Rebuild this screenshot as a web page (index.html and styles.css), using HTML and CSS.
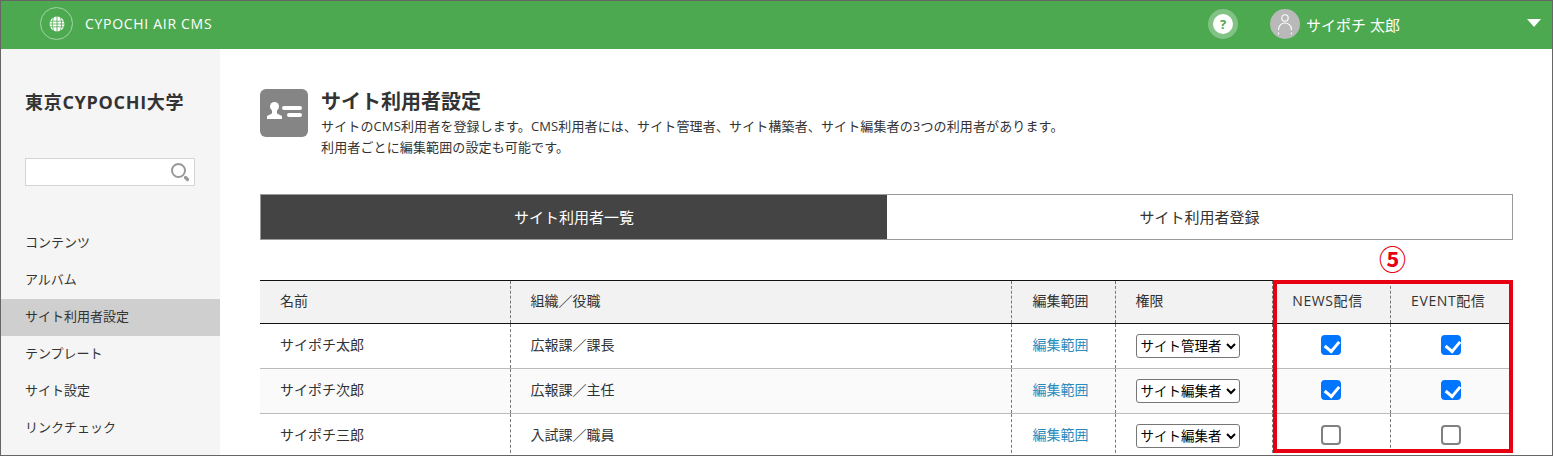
FILE: index.html
```html
<!DOCTYPE html>
<html lang="ja">

<head>
    <meta charset="UTF-8">
    <meta name="viewport" content="width=device-width, initial-scale=1.0">
    <title>サイト利用者設定</title>
    <link rel="stylesheet" href="styles.css">
</head>

<body>
    <div class="frame">
        <header class="topbar">
            <div class="logo-ring">
                <svg width="16" height="16" viewBox="0 0 16 16" fill="none" stroke="#fff">
                    <circle cx="8" cy="8" r="7.5" fill="#fff" stroke="none" />
                    <path d="M0 5.2h16M0 8h16M0 10.8h16M8 0v16M4.8 1c-2 4-2 10 0 14M11.2 1c2 4 2 10 0 14" stroke="#4ca950" stroke-width=".8" />
                </svg>
            </div>
            <span class="brand">CYPOCHI AIR CMS</span>
            <div class="help"><span class="help-dot">?</span></div>
            <div class="avatar">
                <svg width="20" height="22" viewBox="0 0 20 22" fill="none" stroke="#fff" stroke-width="1.1">
                    <circle cx="10" cy="5" r="3.200" />
                    <path d="M3.500 17c0-5 3.500-7 6.500-7s6.500 2 6.500 7" />
                    <path d="M3.500 19.500v2M16.500 19.500v2" />
                </svg>
            </div>
            <span class="user-name">サイポチ 太郎</span>
            <span class="caret"></span>
        </header>

        <div class="layout">
            <aside class="sidebar">
                <div class="org">東京CYPOCHI大学</div>
                <div class="search">
                    <svg width="20" height="20" viewBox="0 0 20 20" fill="none">
                        <circle cx="8.5" cy="8.5" r="6.500" stroke="#999" stroke-width="2" />
                        <path d="M15.500 15.500l2 2" stroke="#999" stroke-width="3.200" stroke-linecap="round" />
                    </svg>
                </div>
                <nav class="side-nav">
                    <a>コンテンツ</a>
                    <a>アルバム</a>
                    <a class="active">サイト利用者設定</a>
                    <a>テンプレート</a>
                    <a>サイト設定</a>
                    <a>リンクチェック</a>
                </nav>
            </aside>

            <main class="content">
                <div class="page-head">
                    <div class="page-icon">
                        <svg width="48" height="48" viewBox="0 0 48 48" fill="#fff">
                            <circle cx="14.500" cy="17.500" r="4.500" />
                            <path d="M12 21h5v3.500l5 2.500v3H7v-3l5-2.500z" />
                            <rect x="22" y="17" width="20" height="4" rx="2" />
                            <rect x="27" y="24" width="15" height="4" rx="2" />
                        </svg>
                    </div>
                    <div>
                        <h1>サイト利用者設定</h1>
                        <p>サイトのCMS利用者を登録します。CMS利用者には、サイト管理者、サイト構築者、サイト編集者の3つの利用者があります。<br>利用者ごとに編集範囲の設定も可能です。</p>
                    </div>
                </div>

                <div class="tabs">
                    <div class="tab on">サイト利用者一覧</div>
                    <div class="tab">サイト利用者登録</div>
                </div>

                <div class="table-wrap">
                    <div class="marker">⑤</div>
                    <div class="highlight"></div>
                    <table class="users">
                        <thead>
                            <tr>
                                <th class="c-name">名前</th>
                                <th class="c-org">組織／役職</th>
                                <th class="c-range">編集範囲</th>
                                <th class="c-role">権限</th>
                                <th class="c-news">NEWS配信</th>
                                <th class="c-event">EVENT配信</th>
                            </tr>
                        </thead>
                        <tbody>
                            <tr>
                                <td>サイポチ太郎</td>
                                <td>広報課／課長</td>
                                <td class="range"><a class="link">編集範囲</a></td>
                                <td class="role"><select><option>サイト管理者</option></select></td>
                                <td class="mid"><input type="checkbox" checked></td>
                                <td class="mid"><input type="checkbox" checked></td>
                            </tr>
                            <tr class="alt">
                                <td>サイポチ次郎</td>
                                <td>広報課／主任</td>
                                <td class="range"><a class="link">編集範囲</a></td>
                                <td class="role"><select><option>サイト編集者</option></select></td>
                                <td class="mid"><input type="checkbox" checked></td>
                                <td class="mid"><input type="checkbox" checked></td>
                            </tr>
                            <tr>
                                <td>サイポチ三郎</td>
                                <td>入試課／職員</td>
                                <td class="range"><a class="link">編集範囲</a></td>
                                <td class="role"><select><option>サイト編集者</option></select></td>
                                <td class="mid"><input type="checkbox"></td>
                                <td class="mid"><input type="checkbox"></td>
                            </tr>
                        </tbody>
                    </table>
                </div>
            </main>
        </div>
    </div>
</body>

</html>
```

FILE: styles.css
```css
* {
    box-sizing: border-box;
}

html,
body {
    margin: 0;
    height: 456px;
    overflow: hidden;
}

body {
    font-family: "Open Sans", "Noto Sans CJK JP", sans-serif;
    font-size: 14px;
    color: #333;
    background: #fff;
}

.frame {
    width: 1553px;
    height: 456px;
    border: 1px solid #666;
    overflow: hidden;
}

.topbar {
    display: flex;
    align-items: center;
    height: 48px;
    padding: 0 11px 0 39px;
    background: #4ca950;
    color: #fff;
}

.logo-ring {
    display: flex;
    justify-content: center;
    align-items: center;
    width: 33px;
    height: 33px;
    margin-bottom: 3px;
    border: 1px solid #a5d4a7;
    border-radius: 50%;
}

.brand {
    margin: 0 0 4px 12px;
    font-size: 14px;
    letter-spacing: .7px;
}

.help {
    display: flex;
    justify-content: center;
    align-items: center;
    width: 30px;
    height: 30px;
    margin: 0 0 2px auto;
    border-radius: 50%;
    background: #82c285;
}

.help-dot {
    width: 20px;
    height: 20px;
    border-radius: 50%;
    background: #fff;
    color: #4ca950;
    font-size: 13px;
    font-weight: 700;
    line-height: 20px;
    text-align: center;
}

.avatar {
    display: flex;
    justify-content: center;
    align-items: center;
    width: 30px;
    height: 30px;
    margin: 0 0 2px 32px;
    border-radius: 50%;
    background: #b9b9b9;
}

.user-name {
    margin: 0 127px 2px 6px;
    font-size: 15px;
}

.caret {
    width: 0;
    height: 0;
    margin-bottom: 4px;
    border-left: 7px solid transparent;
    border-right: 7px solid transparent;
    border-top: 8px solid #fff;
}

.layout {
    display: flex;
    height: 406px;
}

.sidebar {
    flex: none;
    width: 219px;
    padding-top: 41px;
    background: #f5f5f5;
}

.org {
    margin-left: 24px;
    font-size: 18px;
    font-weight: 700;
    line-height: 24px;
    letter-spacing: .7px;
}

.search {
    display: flex;
    justify-content: flex-end;
    align-items: center;
    width: 170px;
    height: 28px;
    margin: 44px 0 0 24px;
    padding-right: 4px;
    background: #fff;
    border: 1px solid #d5d5d5;
}

.side-nav {
    display: flex;
    flex-direction: column;
    margin-top: 39px;
}

.side-nav a {
    height: 37px;
    padding-left: 24px;
    font-size: 13px;
    line-height: 35px;
}

.side-nav a.active {
    background: #cfcfcf;
}

.content {
    flex: none;
    width: 1293px;
    padding: 40px 0 0 40px;
}

.page-head {
    display: flex;
    gap: 13px;
}

.page-icon {
    flex: none;
    width: 48px;
    height: 48px;
    border-radius: 6px;
    background: #858585;
}

.page-icon svg {
    display: block;
}

h1 {
    margin: 0;
    padding-top: 1px;
    font-size: 20px;
    font-weight: 700;
    line-height: 24px;
}

.page-head p {
    margin: 2px 0 0;
    font-size: 13px;
    line-height: 21px;
    letter-spacing: .13px;
}

.tabs {
    display: flex;
    width: 1253px;
    height: 46px;
    margin-top: 36px;
    border: 1px solid #999;
}

.tab {
    flex: 1;
    font-size: 15px;
    line-height: 44px;
    text-align: center;
}

.tab.on {
    flex: none;
    width: 626px;
    background: #444;
    color: #fff;
}

.table-wrap {
    position: relative;
    width: 1253px;
    margin-top: 40px;
}

.marker {
    position: absolute;
    top: -36px;
    left: 1119px;
    color: #e60012;
    font-size: 27px;
    font-weight: 700;
    line-height: 32px;
}

.highlight {
    position: absolute;
    top: 0;
    left: 1013px;
    width: 240px;
    height: 173px;
    border: 4px solid #e60012;
}

.users {
    width: 1253px;
    border-collapse: collapse;
    table-layout: fixed;
    border-top: 1px solid #111;
}

.users th {
    height: 43px;
    padding: 0 20px 4px;
    background: #f2f2f2;
    border-bottom: 1px solid #111;
    font-weight: 400;
    text-align: left;
}

.users td {
    height: 45px;
    padding: 0 20px 5px;
    border-bottom: 1px solid #bbb;
}

.users th + th,
.users td + td {
    border-left: 1px dashed #777;
}

.users tr.alt td {
    background: #fafafa;
}

.c-name {
    width: 250px;
}

.c-org {
    width: 501px;
}

.c-range {
    width: 104px;
}

.c-role {
    width: 157px;
}

.c-news {
    width: 118px;
}

.users th.c-range,
.users td.range {
    padding-left: 21px;
}

.users th.c-news,
.users th.c-event {
    padding: 0 7px 4px 0;
    letter-spacing: .6px;
    text-align: center;
}

.users td.mid {
    padding: 0 1px 2px 0;
    text-align: center;
}

.users td.role {
    padding-bottom: 0;
}

.link {
    color: #2a8bbd;
}

select {
    width: 104px;
    height: 24px;
    padding: 0;
    font-family: inherit;
    font-size: 13.500px;
    color: #000;
    background: #fff;
    border: 1px solid #767676;
    border-radius: 3px;
}

input[type="checkbox"] {
    position: relative;
    display: block;
    width: 20px;
    height: 20px;
    margin: 0 auto;
    appearance: none;
    background: #fff;
    border: 2px solid #808080;
    border-radius: 4px;
}

input[type="checkbox"]:checked {
    background: #0075ff;
    border-color: #0075ff;
}

input[type="checkbox"]:checked::after {
    content: "";
    position: absolute;
    top: 1px;
    left: 4.500px;
    width: 7px;
    height: 11px;
    border: solid #fff;
    border-width: 0 3px 3px 0;
    transform: rotate(40deg);
}
```
